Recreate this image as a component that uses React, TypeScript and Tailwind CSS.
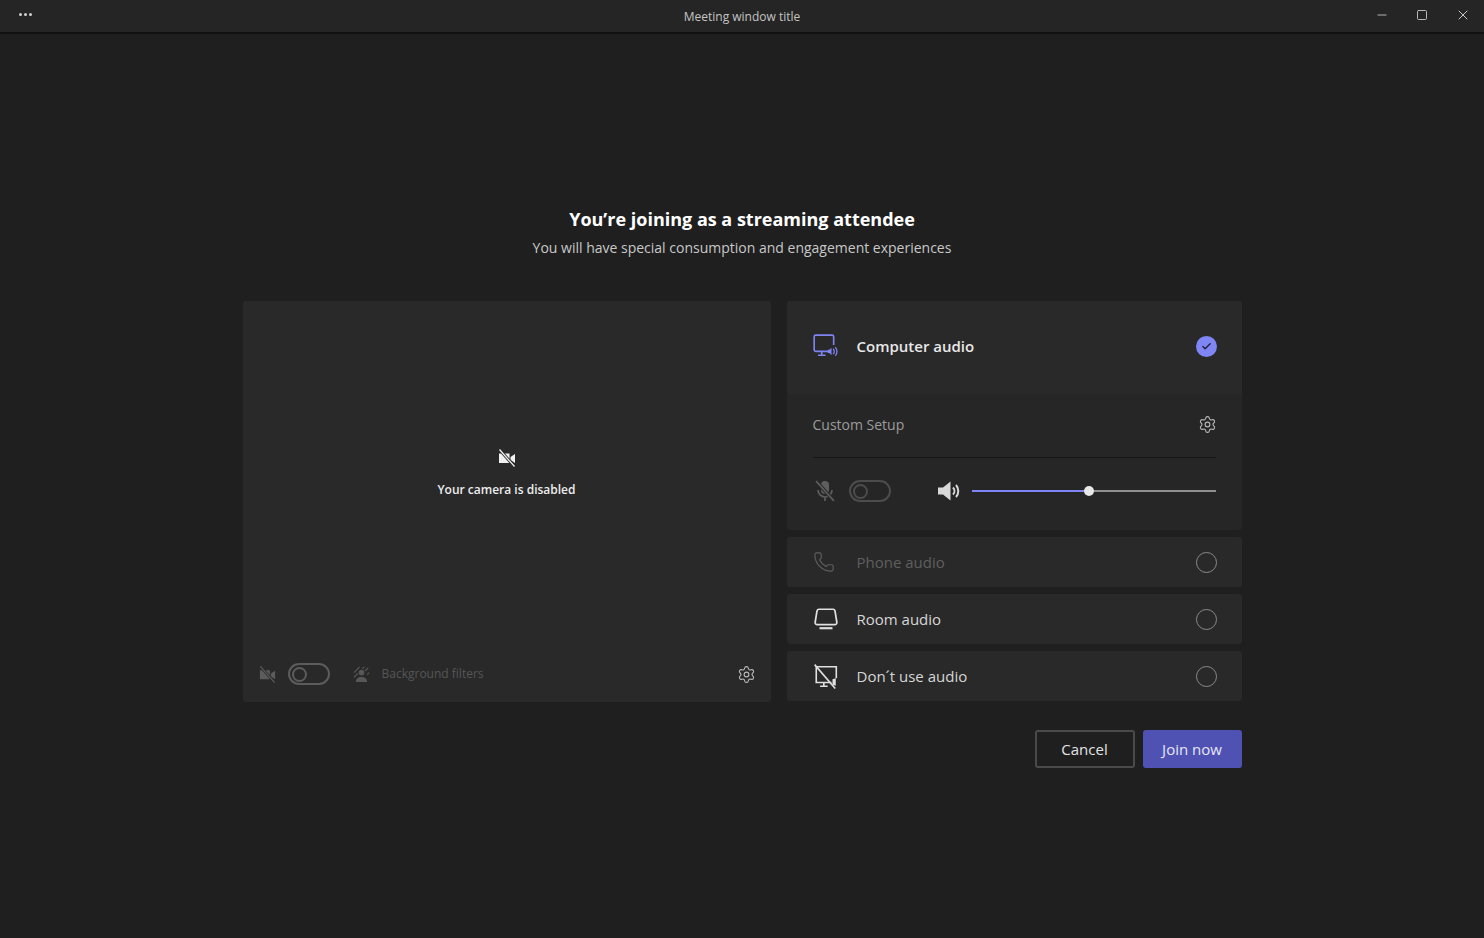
import { Minus, Phone, Settings, Square, X, Check } from "lucide-react";

const fontStack = { fontFamily: '"Open Sans", "Noto Sans", sans-serif' };

function CameraOff({ className }: { className?: string }) {
    return (
        <svg viewBox="0 0 20 20" className={className} fill="none">
            <path d="M2 5.5h10.5v9.5H2z" fill="currentColor" />
            <path d="M13.5 9l4.5-3v9l-4.5-3z" fill="currentColor" />
            <path d="M2.5 1.5l15 17" stroke="#2a2a2a" strokeWidth="3" />
            <path d="M2.5 1.5l15 17" stroke="currentColor" strokeWidth="1.3" />
        </svg>
    );
}

function MonitorAudio() {
    return (
        <svg viewBox="0 0 24 24" className="h-[26px] w-[26px] text-[#7f85f5]" fill="none" stroke="currentColor">
            <path d="M16 17H3.5A1.5 1.5 0 0 1 2 15.5v-12A1.5 1.5 0 0 1 3.5 2h15A1.5 1.5 0 0 1 20 3.5V11" strokeWidth="1.5" />
            <path d="M9 17v3M5.5 20.5h7" strokeWidth="1.5" />
            <path d="M14.5 15.5h1.5l2-2v7l-2-2h-1.5z" fill="currentColor" stroke="none" />
            <path d="M19.5 14.5a3.5 3.5 0 0 1 0 5M21.5 13a6 6 0 0 1 0 8" strokeWidth="1.2" />
        </svg>
    );
}

function RoomIcon() {
    return (
        <svg viewBox="0 0 24 24" className="h-[26px] w-[26px] text-[#e0e0e0]" fill="none" stroke="currentColor" strokeWidth="1.6">
            <path d="M5.5 3h13c1 0 1.6.6 1.8 1.5L22 15c.2 1.3-.7 2.2-2 2.2H4c-1.3 0-2.2-.9-2-2.2L3.7 4.5C3.9 3.6 4.500 3 5.500 3z" />
            <path d="M6 20.500h12" strokeWidth="2" />
        </svg>
    );
}

function NoAudioIcon() {
    return (
        <svg viewBox="0 0 24 24" className="h-[26px] w-[26px] text-[#e0e0e0]" fill="none" stroke="currentColor" strokeWidth="1.5">
            <path d="M3 3.500h18.500V14M17 18H3V3.500" />
            <path d="M10 18v3M6.500 21.500h7" />
            <path d="M1.500 1.500l19 22" />
            <path d="M18 15l3 -1v7l-3 -1z" fill="currentColor" stroke="none" />
        </svg>
    );
}

function MicOff() {
    return (
        <svg viewBox="0 0 24 24" className="h-[24px] w-[24px] text-[#5e5e5e]" fill="none" stroke="currentColor" strokeWidth="1.7">
            <rect x="8" y="2" width="8" height="13" rx="4" fill="currentColor" stroke="none" />
            <path d="M5 11a7 7 0 0 0 14 0M12 18v4" />
            <path d="M3 2l18 20" stroke="#2a2a2a" strokeWidth="3.500" />
            <path d="M3 2l18 20" />
        </svg>
    );
}

function Speaker() {
    return (
        <svg viewBox="0 0 24 24" className="h-[24px] w-[24px] text-[#d8d8d8]" fill="none" stroke="currentColor">
            <path d="M1 8.500h5L13.500 2.500v19L6 15.500H1z" fill="currentColor" stroke="none" />
            <path d="M16 8.500a5 5 0 0 1 0 7M19 6a9 9 0 0 1 0 12" strokeWidth="2" />
        </svg>
    );
}

function BackgroundIcon() {
    return (
        <svg viewBox="0 0 20 20" className="h-[19px] w-[19px] text-[#575757]" fill="none" stroke="currentColor" strokeWidth="1.300">
            <path d="M2 8l6-6M2 13l4-4M13 2l-2 2M17 3l-3 3M18 8l-2 2" />
            <circle cx="10" cy="8" r="3" fill="currentColor" stroke="none" />
            <path d="M4 18c0-3.500 2.500-5.500 6-5.500s6 2 6 5.500z" fill="currentColor" stroke="none" />
        </svg>
    );
}

function Toggle({ tone }: { tone: string }) {
    return (
        <div className={`flex h-[22px] w-[42px] items-center rounded-full border-2 pl-[2px] ${tone}`}>
            <div className={`h-[15px] w-[15px] rounded-full border-2 ${tone}`} />
        </div>
    );
}

function Radio() {
    return <div className="h-[21px] w-[21px] rounded-full border-[1.5px] border-[#8a8a8a]" />;
}

function AudioRow({ icon, label, dim }: { icon: React.ReactNode; label: string; dim?: boolean }) {
    return (
        <div className="flex h-[50px] items-center rounded-[3px] bg-[#292929] pl-[26px] pr-[25px]">
            <div className="flex w-[44px]">{icon}</div>
            <span className={`flex-1 text-[15px] font-medium ${dim ? "text-[#5f5f5f]" : "text-[#d6d6d6]"}`}>
                {label}
            </span>
            <Radio />
        </div>
    );
}

export default function App() {
    return (
        <div className="flex h-[938px] flex-col bg-[#1f1f1f] text-white" style={fontStack}>
            <div className="relative flex h-[34px] items-center justify-between border-b-2 border-[#111111] bg-[#252525] pb-[3px] pl-[19px] pr-[13px]">
                <div className="flex gap-[2px]">
                    <div className="h-[3px] w-[3px] rounded-full bg-[#d0d0d0]" />
                    <div className="h-[3px] w-[3px] rounded-full bg-[#d0d0d0]" />
                    <div className="h-[3px] w-[3px] rounded-full bg-[#d0d0d0]" />
                </div>
                <span className="absolute left-0 right-0 top-[8px] text-center text-[12px] text-[#c4c4c4]">
                    Meeting window title
                </span>
                <div className="flex items-center gap-[27px] text-[#c8c8c8]">
                    <Minus size={14} strokeWidth={1.5} />
                    <Square size={12} strokeWidth={1.8} />
                    <X size={16} strokeWidth={1.5} />
                </div>
            </div>

            <div className="mx-auto mt-[171px] flex w-[999px] flex-col">
                <h1 className="text-center text-[18px] leading-[28px] font-bold">You’re joining as a streaming attendee</h1>
                <p className="mt-[3px] text-center text-[14px] leading-[24px] text-[#c8c8c8]">
                    You will have special consumption and engagement experiences
                </p>

                <div className="mt-[41px] flex gap-[16px]">
                    <div className="flex h-[401px] w-[528px] flex-col rounded-[3px] bg-[#292929]">
                        <div className="flex flex-1 flex-col items-center pt-[147px]">
                            <CameraOff className="h-[20px] w-[20px] text-[#f0f0f0]" />
                            <span className="mt-[14px] text-[12px] leading-[16px] font-semibold text-[#ededed]">
                                Your camera is disabled
                            </span>
                        </div>
                        <div className="flex h-[54px] items-center pb-[2px] pl-[15px] pr-[15px]">
                            <CameraOff className="h-[19px] w-[19px] text-[#5c5c5c]" />
                            <div className="ml-[11px]">
                                <Toggle tone="border-[#5c5c5c]" />
                            </div>
                            <div className="ml-[22px]">
                                <BackgroundIcon />
                            </div>
                            <span className="ml-[11px] flex-1 text-[12px] text-[#565656]">Background filters</span>
                            <Settings size={19} strokeWidth={1.400} className="text-[#b8b8b8]" />
                        </div>
                    </div>

                    <div className="flex w-[455px] flex-col gap-[7px]">
                        <div className="flex flex-col">
                            <div className="flex h-[93px] items-center rounded-t-[3px] bg-[#292929] pb-[3px] pl-[25px] pr-[25px]">
                                <div className="flex w-[45px]">
                                    <MonitorAudio />
                                </div>
                                <span className="flex-1 text-[15px] font-semibold text-[#e8e8e8]">Computer audio</span>
                                <div className="flex h-[21px] w-[21px] items-center justify-center rounded-full bg-[#7f85f5]">
                                    <Check size={11} strokeWidth={3} className="text-[#1f1f3a]" />
                                </div>
                            </div>
                            <div className="flex h-[136px] flex-col rounded-b-[3px] bg-[#262626] px-[26px]">
                                <div className="flex h-[64px] items-center justify-between border-b border-[#151515] pb-[3px]">
                                    <span className="text-[14px] text-[#9c9c9c]">Custom Setup</span>
                                    <Settings size={19} strokeWidth={1.400} className="mr-[-1px] text-[#b8b8b8]" />
                                </div>
                                <div className="mt-[21px] flex items-center">
                                    <MicOff />
                                    <div className="ml-[12px]">
                                        <Toggle tone="border-[#4c4c4c]" />
                                    </div>
                                    <div className="ml-[46px]">
                                        <Speaker />
                                    </div>
                                    <div className="relative ml-[11px] flex h-[2px] flex-1 bg-[#8f8f8f]">
                                        <div className="h-[2px] w-[117px] bg-[#7f85f5]" />
                                        <div className="absolute left-[112px] top-[-4px] h-[10px] w-[10px] rounded-full bg-[#e8e8e8]" />
                                    </div>
                                </div>
                            </div>
                        </div>
                        <AudioRow icon={<Phone size={22} strokeWidth={1.300} className="text-[#5e5e5e]" />} label="Phone audio" dim />
                        <AudioRow icon={<RoomIcon />} label="Room audio" />
                        <AudioRow icon={<NoAudioIcon />} label="Don´t use audio" />
                    </div>
                </div>

                <div className="mt-[28px] flex justify-end gap-[8px]">
                    <button className="h-[38px] w-[100px] rounded-[3px] border-2 border-[#4a4a4a] text-[15px] font-medium text-[#e4e4e4]">
                        Cancel
                    </button>
                    <button className="h-[38px] w-[99px] rounded-[3px] bg-[#4f52b2] text-[15px] font-medium text-[#e6e6f5]">
                        Join now
                    </button>
                </div>
            </div>
        </div>
    );
}
